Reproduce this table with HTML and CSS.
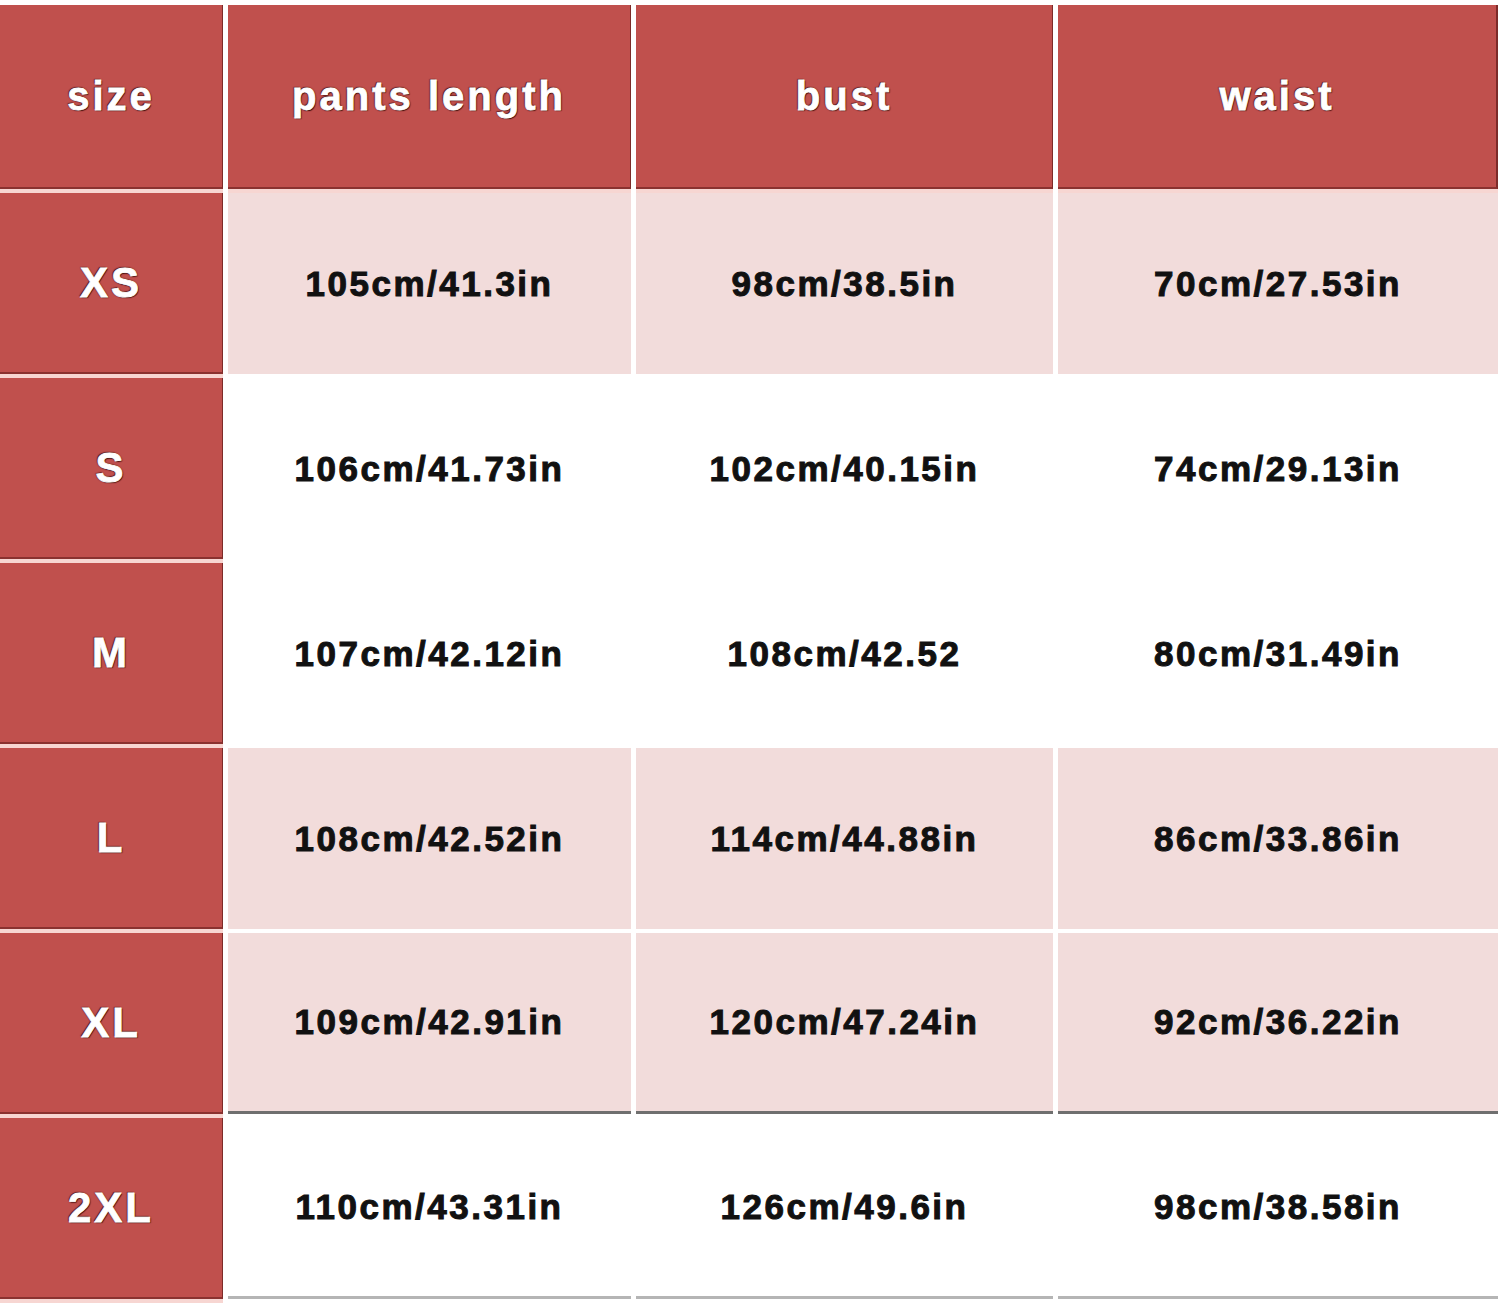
FILE: index.html
```html
<!DOCTYPE html>
<html>
<head>
<meta charset="utf-8">
<link rel="stylesheet" href="styles.css">
</head>
<body>
<div class="chart">
  <div class="cell head first">size</div>
  <div class="cell head">pants length</div>
  <div class="cell head">bust</div>
  <div class="cell head last">waist</div>

  <div class="cell size">XS</div>
  <div class="cell data pink">105cm/41.3in</div>
  <div class="cell data pink">98cm/38.5in</div>
  <div class="cell data pink">70cm/27.53in</div>

  <div class="cell size">S</div>
  <div class="cell data">106cm/41.73in</div>
  <div class="cell data">102cm/40.15in</div>
  <div class="cell data">74cm/29.13in</div>

  <div class="cell size">M</div>
  <div class="cell data">107cm/42.12in</div>
  <div class="cell data">108cm/42.52</div>
  <div class="cell data">80cm/31.49in</div>

  <div class="cell size">L</div>
  <div class="cell data pink">108cm/42.52in</div>
  <div class="cell data pink">114cm/44.88in</div>
  <div class="cell data pink">86cm/33.86in</div>

  <div class="cell size">XL</div>
  <div class="cell data pink ruled">109cm/42.91in</div>
  <div class="cell data pink ruled">120cm/47.24in</div>
  <div class="cell data pink ruled">92cm/36.22in</div>

  <div class="cell size">2XL</div>
  <div class="cell data bottom">110cm/43.31in</div>
  <div class="cell data bottom">126cm/49.6in</div>
  <div class="cell data bottom">98cm/38.58in</div>
</div>
</body>
</html>
```
FILE: styles.css
```css
html, body {
  margin: 0;
  padding: 0;
  background: #ffffff;
}

.chart {
  width: 1500px;
  height: 1308px;
  box-sizing: border-box;
  padding-top: 5px;
  display: grid;
  grid-template-columns: 223px 403px 417px 440px;
  grid-template-rows: 184px repeat(6, 181px);
  column-gap: 5px;
  row-gap: 4px;
  background: #ffffff;
  font-family: "Liberation Sans", Arial, sans-serif;
  font-weight: bold;
}

.cell {
  display: flex;
  align-items: center;
  justify-content: center;
  box-sizing: border-box;
  white-space: nowrap;
}

.head,
.size {
  background: #c0504d;
  color: #ffffff;
  border-right: 1px solid #7d2b29;
  border-bottom: 2px solid #8a3230;
  -webkit-text-stroke: 0.8px #ffffff;
  text-shadow: 0 0 2px #4a1212, 1px 1px 1px #3a0c0c, -1px -1px 1px #5a1a1a;
}

.head {
  font-size: 40px;
  letter-spacing: 3px;
  box-shadow: 0 4px 0 #f7d6d2;
}

.head.last {
  border-right: 2px solid #7d2b29;
}

.size {
  font-size: 42px;
  letter-spacing: 3px;
  box-shadow: 0 4px 0 #f7d6d2;
}

.data {
  background: #ffffff;
  color: #111111;
  font-size: 35px;
  letter-spacing: 2.5px;
  -webkit-text-stroke: 1px #111111;
}

.data.pink {
  background: #f2dcdb;
}

.data.ruled {
  border-bottom: 3px solid #6f6f6f;
}

.data.bottom {
  border-bottom: 3px solid #b5b5b5;
}
```
